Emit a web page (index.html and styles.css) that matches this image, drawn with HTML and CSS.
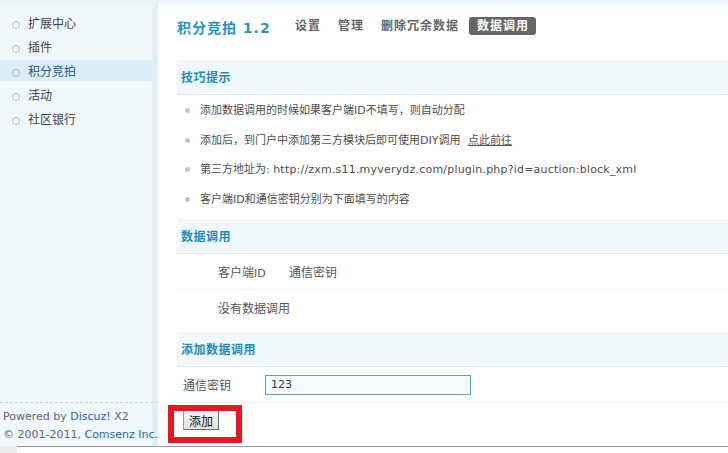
FILE: index.html
```html
<!DOCTYPE html>
<html lang="zh-CN">
<head>
    <meta charset="UTF-8">
    <title>积分竞拍 1.2 - 数据调用</title>
    <link rel="stylesheet" href="styles.css">
</head>
<body>
    <div class="frame">
        <div class="side">
            <ul class="menu">
                <li>扩展中心</li>
                <li>插件</li>
                <li class="on">积分竞拍</li>
                <li>活动</li>
                <li>社区银行</li>
            </ul>
            <div class="copy">
                <p>Powered by <a href="#">Discuz!</a> X2</p>
                <p>&copy; 2001-2011, <a href="#">Comsenz Inc.</a></p>
            </div>
        </div>

        <div class="main">
            <div class="head">
                <h1 class="title">积分竞拍 1.2</h1>
                <ul class="tabs">
                    <li>设置</li>
                    <li>管理</li>
                    <li>删除冗余数据</li>
                    <li class="on">数据调用</li>
                </ul>
            </div>

            <div class="box">
                <h3 class="box-hd">技巧提示</h3>
                <ul class="tips">
                    <li>添加数据调用的时候如果客户端ID不填写，则自动分配</li>
                    <li>添加后，到门户中添加第三方模块后即可使用DIY调用 <a href="#" class="go">点此前往</a></li>
                    <li>第三方地址为: <span class="url">http://zxm.s11.myverydz.com/plugin.php?id=auction:block_xml</span></li>
                    <li>客户端ID和通信密钥分别为下面填写的内容</li>
                </ul>
            </div>

            <div class="box">
                <h3 class="box-hd">数据调用</h3>
                <div class="row line">
                    <span class="col-id">客户端<span class="en">ID</span></span>
                    <span>通信密钥</span>
                </div>
                <div class="row">
                    <span>没有数据调用</span>
                </div>
            </div>

            <div class="box">
                <h3 class="box-hd">添加数据调用</h3>
                <div class="form-row line">
                    <label class="lbl" for="key">通信密钥</label>
                    <input type="text" id="key" class="txt" value="123">
                </div>
                <div class="btn-row">
                    <button class="btn">添加</button>
                    <span class="mark"></span>
                </div>
            </div>
        </div>
    </div>
    <div class="hscroll"></div>
</body>
</html>
```

FILE: styles.css
```css
* {
    box-sizing: border-box;
}
body {
    margin: 0;
    font: 12px/1.5 "DejaVu Sans", "Noto Sans CJK SC", sans-serif;
    color: #555;
    background: #fff;
    overflow: hidden;
}
a {
    color: #2366a8;
    text-decoration: none;
}
ul, p, h1, h3 {
    margin: 0;
    padding: 0;
    list-style: none;
}
.en {
    font-size: 11px;
}

.frame {
    display: flex;
    height: 446px;
}

/* left menu */
.side {
    width: 158px;
    flex: none;
    display: flex;
    flex-direction: column;
    background:
        linear-gradient(to bottom, #e6f1f8, rgba(240, 248, 252, 0) 9px),
        linear-gradient(to right, #f0f8fc 152px, #e0eef7 152px);
}
.menu {
    padding-top: 12px;
    width: 152px;
}
.menu li {
    position: relative;
    height: 21px;
    line-height: 21px;
    margin-bottom: 3px;
    padding: 2px 0 0 28px;
    color: #444;
}
.menu li::before {
    content: "";
    position: absolute;
    left: 12px;
    top: 9px;
    width: 6px;
    height: 6px;
    border: 1px solid #b5b5b5;
    border-radius: 50%;
}
.menu li.on {
    background: #dbedf8;
    color: #2a5d80;
}
.copy {
    margin-top: auto;
    margin-bottom: 2px;
    border-top: 1px dashed #cfd6da;
    padding: 5px 0 0 3px;
    font-size: 11px;
    line-height: 18px;
    white-space: nowrap;
    color: #666;
}

/* main */
.main {
    flex: 1;
    min-width: 0;
    padding-left: 19px;
    background: linear-gradient(to bottom, #e9f3f9, #fff 9px);
    overflow: hidden;
}
.head {
    display: flex;
    align-items: flex-start;
    height: 60px;
    padding-top: 17px;
}
.title {
    width: 110px;
    padding-top: 1px;
    font-size: 14px;
    line-height: 20px;
    font-weight: bold;
    letter-spacing: 1px;
    color: #2594c4;
}
.tabs {
    display: flex;
}
.tabs li {
    margin-right: 2px;
    padding: 1px 7px 0 8px;
    height: 18px;
    line-height: 17px;
    font-weight: bold;
    letter-spacing: 1px;
    color: #666;
    border-radius: 3px;
}
.tabs li.on {
    margin-left: 1px;
    background: #666;
    color: #fff;
}

.box {
    margin-bottom: 6px;
}
.box-hd {
    height: 35px;
    line-height: 34px;
    padding: 1px 0 0 4px;
    font-size: 12px;
    font-weight: bold;
    letter-spacing: 0.5px;
    color: #1d8cba;
    background: #f1f8fc;
    border-bottom: 1px dotted #c8dde8;
}
.tips li {
    position: relative;
    height: 29.5px;
    line-height: 29.5px;
    padding: 1px 0 0 23px;
    font-size: 11px;
    color: #4d4d4d;
    white-space: nowrap;
}
.tips li::before {
    content: "";
    position: absolute;
    left: 8px;
    top: 13px;
    width: 5px;
    height: 5px;
    border-radius: 50%;
    background: #c4c4c4;
}
.url {
    letter-spacing: 0.2px;
}
.go {
    margin-left: 4px;
    color: #555;
    text-decoration: underline;
}

.row {
    display: flex;
    height: 36px;
    line-height: 36px;
    padding: 1px 0 0 41px;
}
.line {
    border-bottom: 1px dotted #d5e3ea;
}
.col-id {
    width: 71px;
}

.form-row {
    display: flex;
    align-items: center;
    height: 36px;
    padding-left: 6px;
}
.lbl {
    width: 82px;
    padding-top: 2px;
}
.txt {
    width: 206px;
    height: 20px;
    margin: 0;
    padding: 0 5px;
    border: 1px solid #5fa2bd;
    background: #f4fafd;
    font: 11px "DejaVu Sans", sans-serif;
    color: #333;
}
.btn-row {
    position: relative;
    height: 40px;
    padding: 7px 0 0 6px;
}
.btn {
    width: 36px;
    height: 20px;
    padding: 0;
    border: 1px solid #999;
    border-right-color: #6d6d6d;
    border-bottom-color: #6d6d6d;
    background: linear-gradient(#f6f6f6, #e2e2e2);
    font: 12px "Noto Sans CJK SC", sans-serif;
    color: #111;
}
/* red annotation frame drawn over the button */
.mark {
    position: absolute;
    left: -9px;
    top: 2px;
    width: 74px;
    height: 38px;
    border: 6px solid #e3191f;
}

.hscroll {
    height: 7px;
    display: flex;
}
.hscroll::before {
    content: "";
    width: 17px;
    background: #ececec;
}
.hscroll::after {
    content: "";
    flex: 1;
    border-top: 1px solid #9a9a9a;
}
```
